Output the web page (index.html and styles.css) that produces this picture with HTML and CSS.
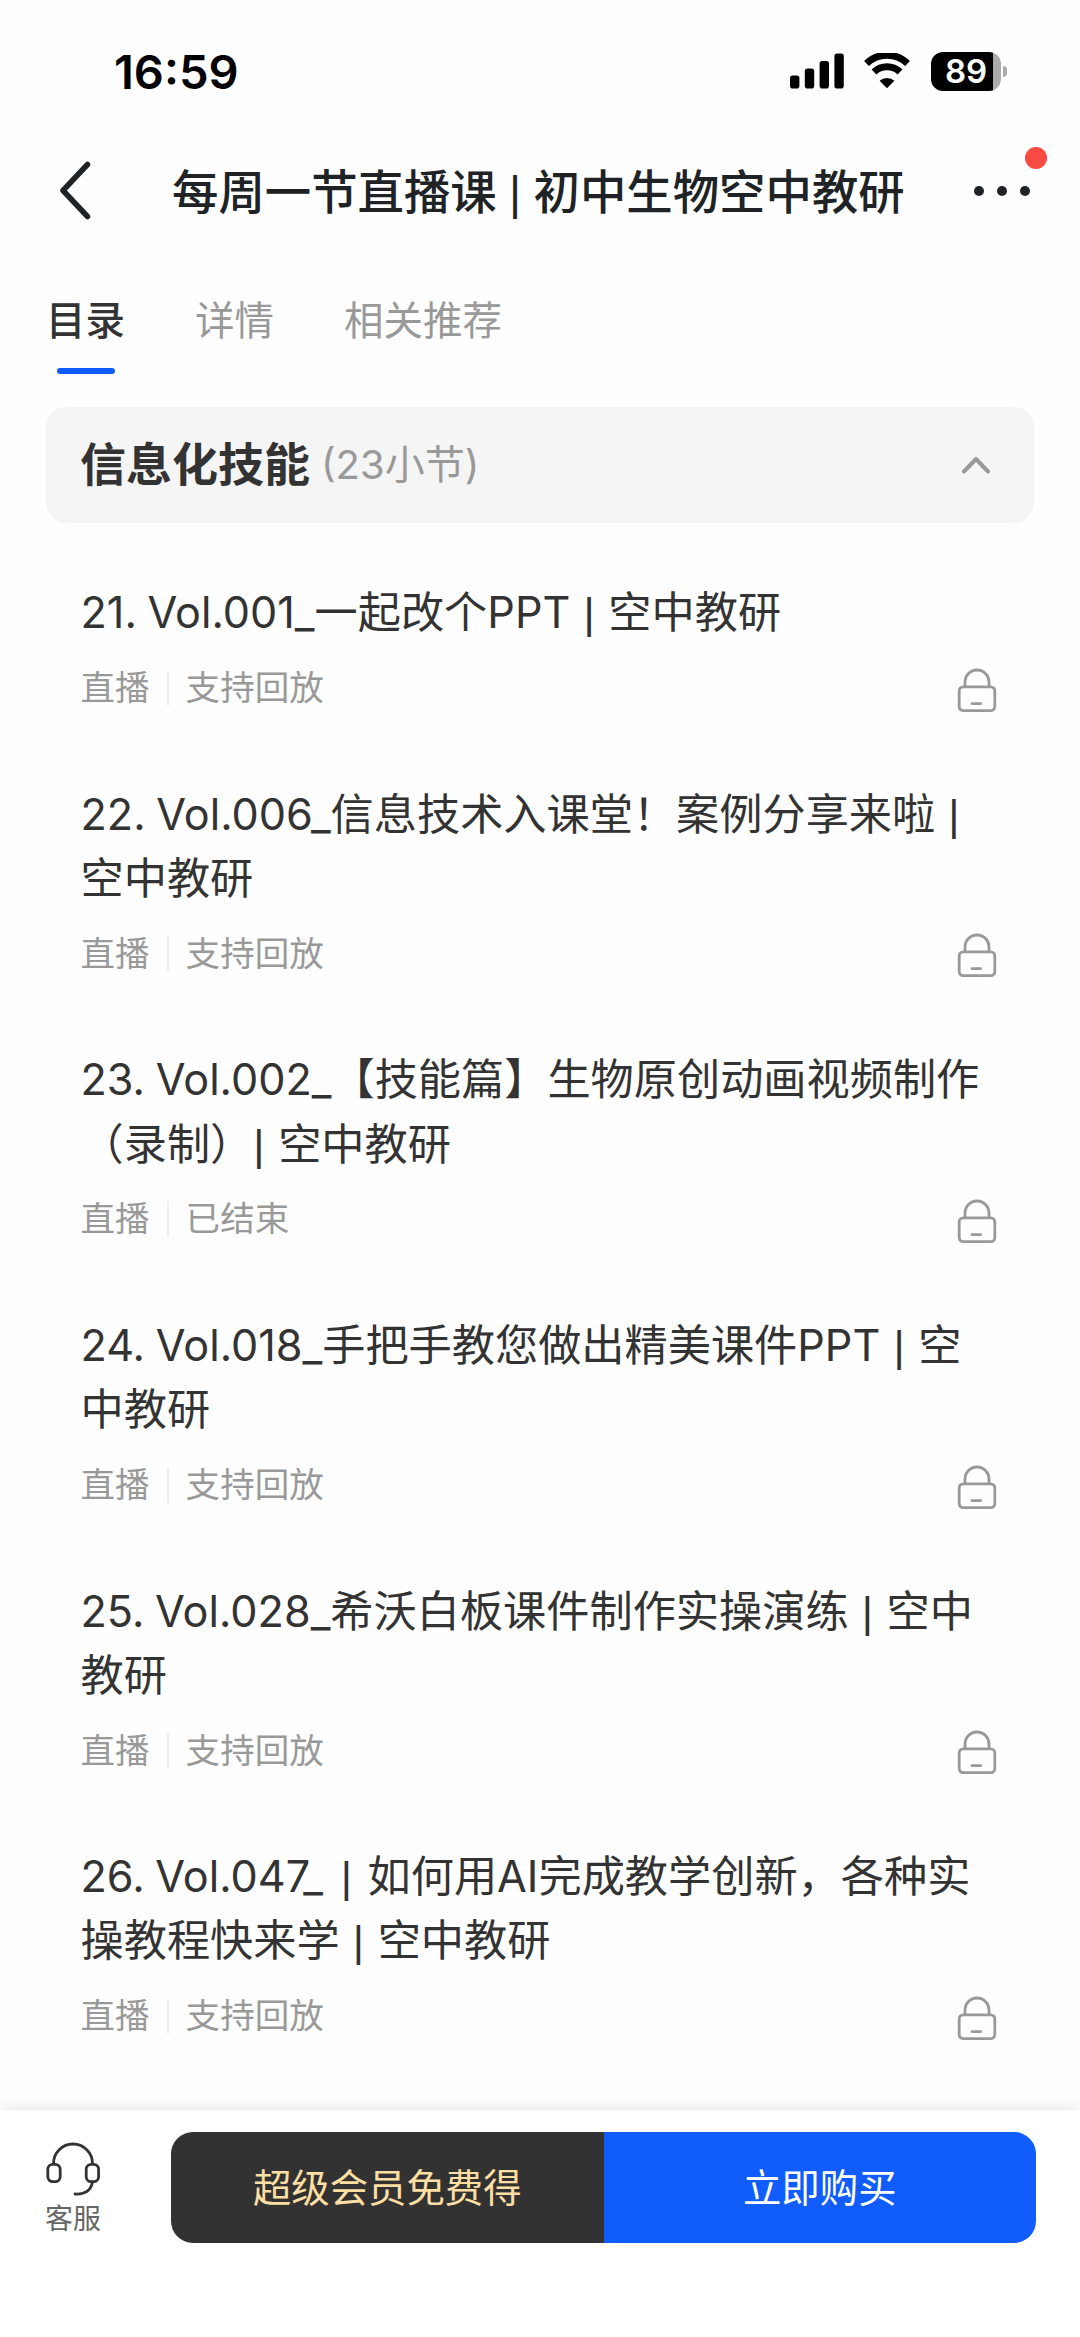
FILE: index.html
```html
<!DOCTYPE html>
<html lang="zh-CN">
<head>
    <meta charset="UTF-8">
    <meta name="viewport" content="width=device-width, initial-scale=1.0">
    <title>每周一节直播课 | 初中生物空中教研</title>
    <link rel="stylesheet" href="styles.css">
</head>
<body>
    <!-- Lock icon shared by every lesson -->
    <svg class="sprite" width="0" height="0">
        <symbol id="lock" viewBox="0 0 40 44">
            <path d="M8 19v-5a12 12 0 0 1 24 0v5" />
            <rect x="2.2" y="18.8" width="35.6" height="23.8" rx="4" />
            <path d="M15 35.6h8.6" stroke-linecap="round" />
        </symbol>
    </svg>

    <div class="status-bar">
        <span class="time">16:59</span>
        <div class="status-icons">
            <svg class="signal" width="54" height="36" viewBox="0 0 54 36">
                <rect x="0" y="22.5" width="9.4" height="13" rx="2.8" />
                <rect x="14.8" y="15.5" width="9.4" height="20" rx="2.8" />
                <rect x="29.6" y="8" width="9.4" height="27.5" rx="2.8" />
                <rect x="44.4" y="0.5" width="9.4" height="35" rx="2.8" />
            </svg>
            <svg class="wifi" width="46" height="36" viewBox="0 0 46 36">
                <path d="M2.5 10.5A29.5 29.5 0 0 1 43.5 10.5" />
                <path d="M10 19A19 19 0 0 1 36 19" />
                <path class="wifi-dot" d="M15.6 27.8a11 11 0 0 1 14.8 0L23 35.2z" />
            </svg>
            <div class="battery">
                <span class="battery-level">89</span>
            </div>
        </div>
    </div>

    <div class="nav">
        <svg class="back" width="32" height="60" viewBox="0 0 32 60">
            <path d="M28.5 3.5L4 29.5L28.5 55.5" />
        </svg>
        <h1>每周一节直播课 <span class="bar">|</span> 初中生物空中教研</h1>
        <div class="more">
            <i></i><i></i><i></i>
            <span class="badge"></span>
        </div>
    </div>

    <div class="tabs">
        <div class="tab active">目录</div>
        <div class="tab">详情</div>
        <div class="tab">相关推荐</div>
    </div>

    <div class="section">
        <span class="section-title">信息化技能</span>
        <span class="section-count">(23小节)</span>
        <svg class="arrow" width="30" height="20" viewBox="0 0 30 20">
            <path d="M3 16.5L15 4L27 16.5" />
        </svg>
    </div>

    <div class="list">
        <div class="item">
            <p class="name">21. Vol.001_一起改个PPT <span class="bar">|</span> 空中教研</p>
            <div class="meta"><span>直播</span><span class="state">支持回放</span><svg class="lock"><use href="#lock" /></svg></div>
        </div>
        <div class="item">
            <p class="name">22. Vol.006_信息技术入课堂！案例分享来啦 <span class="bar">|</span><br>空中教研</p>
            <div class="meta"><span>直播</span><span class="state">支持回放</span><svg class="lock"><use href="#lock" /></svg></div>
        </div>
        <div class="item">
            <p class="name">23. Vol.002_【技能篇】生物原创动画视频制作<br>（录制）<span class="bar tight">|</span> 空中教研</p>
            <div class="meta"><span>直播</span><span class="state">已结束</span><svg class="lock"><use href="#lock" /></svg></div>
        </div>
        <div class="item">
            <p class="name">24. Vol.018_手把手教您做出精美课件PPT <span class="bar">|</span> 空<br>中教研</p>
            <div class="meta"><span>直播</span><span class="state">支持回放</span><svg class="lock"><use href="#lock" /></svg></div>
        </div>
        <div class="item">
            <p class="name">25. Vol.028_希沃白板课件制作实操演练 <span class="bar">|</span> 空中<br>教研</p>
            <div class="meta"><span>直播</span><span class="state">支持回放</span><svg class="lock"><use href="#lock" /></svg></div>
        </div>
        <div class="item">
            <p class="name">26. Vol.047_ <span class="bar wide">|</span> 如何用AI完成教学创新，各种实<br>操教程快来学 <span class="bar">|</span> 空中教研</p>
            <div class="meta"><span>直播</span><span class="state">支持回放</span><svg class="lock"><use href="#lock" /></svg></div>
        </div>
    </div>

    <div class="footer">
        <div class="service">
            <svg width="56" height="56" viewBox="0 0 56 56">
                <path d="M8.5 22V21.5a19.5 19.5 0 0 1 39 0V22" />
                <rect x="2.8" y="22.3" width="12.4" height="17.4" rx="5" />
                <rect x="41.2" y="22.3" width="12.4" height="17.4" rx="5" />
                <path d="M47.5 40c-1.5 8-7 12.5-17.5 12" stroke-linecap="round" />
            </svg>
            <span>客服</span>
        </div>
        <div class="buttons">
            <div class="btn vip">超级会员免费得</div>
            <div class="btn buy">立即购买</div>
        </div>
    </div>
</body>
</html>
```
FILE: styles.css
```css
* {
    box-sizing: border-box;
}

body {
    margin: 0;
    height: 2337px;
    display: flex;
    flex-direction: column;
    overflow: hidden;
    background-color: #fefefe;
    color: #333333;
    font-family: Inter, "Noto Sans CJK SC", sans-serif;
}

svg {
    display: block;
    fill: none;
}

.sprite {
    position: absolute;
}

/* Divider inside the titles */
.bar {
    font-family: "Liberation Sans", sans-serif;
    font-weight: 400;
    line-height: 1;
}

.name .bar {
    margin: 0 3px 0 2.5px;
}

.name .bar.tight {
    margin-left: 0;
}

.name .bar.wide {
    margin: 0 5px 0 7px;
}

/* Status bar */
.status-bar {
    height: 128px;
    padding: 14px 73px 0 114px;
    display: flex;
    align-items: center;
    justify-content: space-between;
    color: #000000;
}

.time {
    font-size: 47px;
    font-weight: 600;
}

.status-icons {
    display: flex;
    align-items: center;
}

.signal {
    fill: #000000;
    margin-right: 20px;
}

.wifi {
    stroke: #000000;
    stroke-width: 7;
    margin-right: 21px;
}

.wifi-dot {
    fill: #000000;
    stroke: none;
}

.battery {
    position: relative;
    width: 70px;
    height: 39px;
    margin-right: 6px;
    border-radius: 12px;
    background: linear-gradient(to right, #000000 62px, #ababab 62px);
}

.battery::after {
    content: "";
    position: absolute;
    left: 72px;
    top: 14px;
    width: 4px;
    height: 11px;
    border-radius: 0 5px 5px 0;
    background-color: #ababab;
}

.battery-level {
    display: block;
    line-height: 39px;
    text-align: center;
    font-size: 33px;
    font-weight: 600;
    color: #ffffff;
}

/* Title bar */
.nav {
    height: 128px;
    padding: 0 47px 3px 59px;
    display: flex;
    align-items: center;
    color: #202326;
}

.back {
    stroke: #202326;
    stroke-width: 5.5;
    stroke-linecap: round;
    stroke-linejoin: round;
}

h1 {
    margin: 0 0 0 81px;
    padding-top: 3px;
    font-size: 46.4px;
    line-height: 64px;
    font-weight: 500;
    white-space: nowrap;
}

.more {
    position: relative;
    display: flex;
    gap: 13px;
    margin-left: auto;
    padding-right: 3px;
}

.more i {
    width: 10px;
    height: 10px;
    border-radius: 50%;
    background-color: #202326;
}

.badge {
    position: absolute;
    right: -14px;
    top: -39px;
    width: 22px;
    height: 22px;
    border-radius: 50%;
    background-color: #f74b43;
}

/* Tabs */
.tabs {
    height: 151px;
    padding: 35px 0 0 46px;
    display: flex;
    gap: 70px;
}

.tab {
    height: 83px;
    font-size: 39.5px;
    line-height: 60px;
    color: #999999;
}

.tab.active {
    display: flex;
    flex-direction: column;
    align-items: center;
    justify-content: space-between;
    font-weight: 500;
    color: #333333;
}

.tab.active::after {
    content: "";
    width: 58px;
    height: 6px;
    border-radius: 3px;
    background-color: #105cfb;
}

/* Section header */
.section {
    height: 116px;
    margin: 0 46px;
    padding: 0 43px 0 34px;
    display: flex;
    align-items: center;
    border-radius: 20px;
    background-color: #f5f5f5;
}

.section-title {
    padding-bottom: 9px;
    font-size: 46px;
    font-weight: 700;
}

.section-count {
    padding-bottom: 6px;
    margin-left: 11px;
    font-size: 40px;
    color: #999999;
}

.arrow {
    margin-left: auto;
    stroke: #999999;
    stroke-width: 4;
    stroke-linecap: round;
    stroke-linejoin: round;
}

/* Lesson list */
.list {
    flex: 1;
    padding: 22px 81px 0 80.5px;
}

.item {
    padding: 35.2px 0;
}

.name {
    margin: 0;
    font-size: 43.2px;
    line-height: 64.3px;
    word-spacing: -1.5px;
    white-space: nowrap;
}

.meta {
    height: 46px;
    margin-top: 20.7px;
    display: flex;
    align-items: center;
    font-size: 34.56px;
    line-height: 46px;
    color: #999999;
}

.state {
    display: flex;
    align-items: center;
}

.state::before {
    content: "";
    width: 2px;
    height: 35px;
    margin: 0 17px;
    background-color: #eeeeee;
}

.lock {
    width: 40px;
    height: 44px;
    margin: 3px 2px 0 auto;
    stroke: #999999;
    stroke-width: 2.8;
}

/* Bottom bar */
.footer {
    height: 227px;
    padding: 22px 44px 0 45px;
    display: flex;
    justify-content: space-between;
    align-items: flex-start;
    background-color: #ffffff;
    box-shadow: 0 0 16px rgba(0, 0, 0, 0.12);
}

.service {
    width: 56px;
    padding-top: 10px;
    font-size: 28px;
    line-height: 38px;
    color: #666666;
}

.service svg {
    margin-bottom: 2px;
    stroke: #333333;
    stroke-width: 2.8;
}

.buttons {
    width: 865px;
    height: 111px;
    display: flex;
    border-radius: 22px;
    overflow: hidden;
}

.btn {
    flex: 1;
    font-size: 38.4px;
    line-height: 112px;
    text-align: center;
}

.vip {
    background-color: #323232;
    color: #fddfa3;
}

.buy {
    background-color: #105cfd;
    color: #ffffff;
}
```
